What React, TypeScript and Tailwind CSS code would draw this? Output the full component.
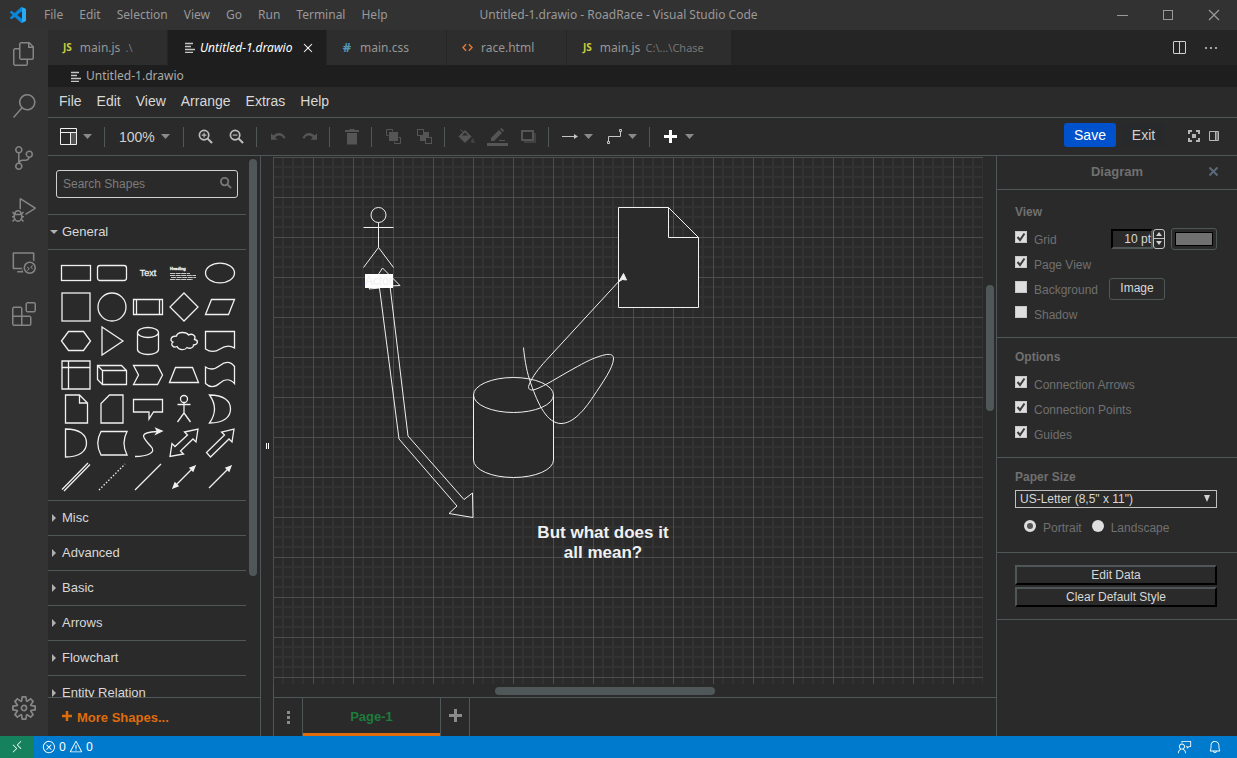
import type { ReactNode } from 'react';
import {
  VscBell,
  VscChromeClose,
  VscChromeMaximize,
  VscChromeMinimize,
  VscClose,
  VscDebugAlt,
  VscEllipsis,
  VscError,
  VscExtensions,
  VscFeedback,
  VscFiles,
  VscRemote,
  VscRemoteExplorer,
  VscSearch,
  VscSettingsGear,
  VscSourceControl,
  VscSplitHorizontal,
  VscWarning,
} from 'react-icons/vsc';

const windowMenu = ['File', 'Edit', 'Selection', 'View', 'Go', 'Run', 'Terminal', 'Help'];
const drawioMenu = ['File', 'Edit', 'View', 'Arrange', 'Extras', 'Help'];
const sections = ['Misc', 'Advanced', 'Basic', 'Arrows', 'Flowchart', 'Entity Relation'];

const activities = [
  { name: 'Explorer', icon: <VscFiles /> },
  { name: 'Search', icon: <VscSearch /> },
  { name: 'Source Control', icon: <VscSourceControl /> },
  { name: 'Run and Debug', icon: <VscDebugAlt /> },
  { name: 'Remote Explorer', icon: <VscRemoteExplorer /> },
  { name: 'Extensions', icon: <VscExtensions /> },
];

// every shape is drawn in a 32x32 box
const shapes: { name: string; art: ReactNode }[] = [
  { name: 'Rectangle', art: <rect x="1.5" y="8.5" width="29" height="15" /> },
  { name: 'Rounded Rectangle', art: <rect x="1.5" y="8.5" width="29" height="15" rx="2.5" /> },
  {
    name: 'Text',
    art: (
      <text x="16" y="19" textAnchor="middle" fontSize="9" fill="#f0f0f0" stroke="#f0f0f0" strokeWidth="0.3">
        Text
      </text>
    ),
  },
  {
    name: 'Textbox',
    art: (
      <>
        <text x="2" y="13" fontSize="4" fontWeight="bold" fill="#f0f0f0" stroke="#f0f0f0" strokeWidth="0.3">
          Heading
        </text>
        <path d="M2 16.5h20M2 18.5h26M3 20.5h25M2 22.5h23" strokeDasharray="5 0.6" strokeWidth="1" opacity="0.8" />
      </>
    ),
  },
  { name: 'Ellipse', art: <ellipse cx="16" cy="16" rx="14.5" ry="9.8" /> },
  { name: 'Square', art: <rect x="2" y="2" width="28" height="28" /> },
  { name: 'Circle', art: <circle cx="16" cy="16" r="14" /> },
  { name: 'Process', art: <path d="M1.5 8.5h29v15h-29zM4.5 8.5v15M27.5 8.5v15" /> },
  { name: 'Diamond', art: <path d="M16 2l14 14-14 14L2 16z" /> },
  { name: 'Parallelogram', art: <path d="M1.5 23.5l6-15h23l-6 15z" /> },
  { name: 'Hexagon', art: <path d="M1.5 16L8.5 6.5h15L30.5 16l-7 9.5h-15z" /> },
  { name: 'Triangle', art: <path d="M6 2l21 14L6 30z" /> },
  { name: 'Cylinder', art: <path d="M5.5 7.5a10.5 5 0 0 1 21 0v17a10.5 5 0 0 1-21 0zM5.5 7.5a10.5 5 0 0 0 21 0" /> },
  {
    name: 'Cloud',
    art: (
      <path d="M8.5 11c-6 0-7 4.500-3.500 6-3 2 0 6.500 4 4.500 2 4 8 4 10 1 3.500 2 7-.5 6.500-2.500 5-.5 5-5 1-5.500 2-4-2.500-6.500-6-4.500-2-3.500-11-3.500-12 1z" />
    ),
  },
  { name: 'Document', art: <path d="M1.5 6.5h29v16.5c-5-3-10-2-14.5 1s-10 3-14.5 0z" /> },
  { name: 'Internal Storage', art: <path d="M2 2h28v28H2zM2 8.5h28M8.5 2v28" /> },
  { name: 'Cube', art: <path d="M1.5 6.5h24l5 5v14h-24l-5-5zM1.5 6.5l5 5h24M6.5 11.5v14" /> },
  { name: 'Step', art: <path d="M1.5 6.5h24l5 9.5-5 9.5h-24l5-9.5z" /> },
  { name: 'Trapezoid', art: <path d="M1.5 23.5l6-15h17l6 15z" /> },
  {
    name: 'Tape',
    art: <path d="M1.5 8c5 3.500 10 2 14.5-1.500s10-5 14.5 1v17c-4.500-5-10-4.500-14.500-.5s-10 5-14.500.5z" />,
  },
  { name: 'Note', art: <path d="M5.5 2h14l8 8v20h-22zM19.5 2v8h8" /> },
  { name: 'Card', art: <path d="M13.5 2h13.5v28H5V10.5z" /> },
  { name: 'Callout', art: <path d="M1.5 6.5h29v12.5h-9l-4.500 7V19H1.5z" /> },
  {
    name: 'Actor',
    art: (
      <>
        <circle cx="16" cy="6" r="3.5" />
        <path d="M16 9.5V20M9.5 11.5h13M16 20l-6.500 9M16 20l6.500 9" />
      </>
    ),
  },
  { name: 'Or', art: <path d="M5.5 2C20 2 26.5 8 26.5 16S20 30 5.5 30q10-14 0-28z" /> },
  { name: 'And', art: <path d="M5.5 2C20 2 26.5 8 26.5 16S20 30 5.5 30z" /> },
  { name: 'Data Storage', art: <path d="M5 4.5h26q-6 11.500 0 23.500H5q-6.500-12 0-23.500z" /> },
  {
    name: 'Curve',
    art: (
      <>
        <path d="M3 29.5c12 0 22-4 16-10-8-9-14-14 6-15" />
        <path d="M30 4l-6-2.500 1.500 3L24 7z" fill="#f0f0f0" />
      </>
    ),
  },
  { name: 'Bidirectional Arrow', art: <path d="M30 2l-2 13-3-3L12.5 24l3 3L2 29.5l2-13 3 3L19.5 8l-3-3z" /> },
  { name: 'Arrow', art: <path d="M30 2l-2 13-3-3L6.5 30l-4-4.500L20.5 8l-3-3z" /> },
  { name: 'Link', art: <path d="M2 28.5L28 2M4 30L30 3.5" /> },
  { name: 'Dotted Line', art: <path d="M3 29L29 3" strokeDasharray="1.5 1.8" /> },
  { name: 'Line', art: <path d="M3 29L29 3" /> },
  {
    name: 'Bidirectional Connector',
    art: (
      <>
        <path d="M6 26L26 6" />
        <path d="M27 5l-5 2 3 3zM5 27l5-2-3-3z" fill="#f0f0f0" />
      </>
    ),
  },
  {
    name: 'Directional Connector',
    art: (
      <>
        <path d="M5 27L26 6" />
        <path d="M27 5l-5 2 3 3z" fill="#f0f0f0" />
      </>
    ),
  },
];

function Caret() {
  return (
    <svg width="9" height="5" viewBox="0 0 9 5" fill="#8a8a8a">
      <path d="M0 0h9L4.5 5z" />
    </svg>
  );
}

function TextFileIcon() {
  return (
    <svg width="10" height="11" viewBox="0 0 10 11" stroke="#c5c5c5" fill="none" strokeWidth="1.3">
      <path d="M0 1.5h8M0 4.500h6M0 7.500h10M0 10.500h8" />
    </svg>
  );
}

function Separator() {
  return <div className="ml-1 mr-1.5 h-5 w-px shrink-0 bg-[#505759]" />;
}

function ToolButton({ name, children }: { name: string; children: ReactNode }) {
  return (
    <button type="button" aria-label={name} className="flex h-8 w-[31px] shrink-0 items-center justify-center">
      {children}
    </button>
  );
}

function TitleBar() {
  return (
    <header className="grid h-[30px] shrink-0 grid-cols-[1fr_auto_1fr] items-center bg-[#323233] text-xs text-[#999999]">
      <div className="flex items-center">
        <svg width="16" height="16" viewBox="0 0 24 24" className="mx-2.5">
          <path
            fill="#0a86d9"
            d="M23.15 2.587L18.21.21a1.494 1.494 0 0 0-1.705.29l-9.46 8.63-4.12-3.128a.999.999 0 0 0-1.276.057L.327 7.261A1 1 0 0 0 .326 8.74L3.899 12 .326 15.26a1 1 0 0 0 .001 1.479L1.65 17.94a.999.999 0 0 0 1.276.057l4.12-3.128 9.46 8.63a1.492 1.492 0 0 0 1.704.29l4.942-2.377A1.5 1.5 0 0 0 24 20.06V3.939a1.5 1.5 0 0 0-.85-1.352zm-5.146 14.861L10.826 12l7.178-5.448v10.896z"
          />
          <path fill="#2aaaf3" d="M18 .2l5.2 2.400L24 4v16l-.8 1.400-5.200 2.400z" />
        </svg>
        <nav className="flex">
          {windowMenu.map((item) => (
            <button key={item} type="button" className="h-[30px] px-2">
              {item}
            </button>
          ))}
        </nav>
      </div>
      <p>Untitled-1.drawio - RoadRace - Visual Studio Code</p>
      <div className="flex justify-end text-base">
        <button type="button" aria-label="Minimize" className="flex h-[30px] w-[46px] items-center justify-center">
          <VscChromeMinimize />
        </button>
        <button type="button" aria-label="Maximize" className="flex h-[30px] w-[46px] items-center justify-center">
          <VscChromeMaximize />
        </button>
        <button type="button" aria-label="Close" className="flex h-[30px] w-[46px] items-center justify-center">
          <VscChromeClose />
        </button>
      </div>
    </header>
  );
}

function ActivityBar() {
  return (
    <aside className="flex w-12 shrink-0 flex-col items-center bg-[#333333] text-2xl text-[#858585]">
      {activities.map((item) => (
        <button key={item.name} type="button" aria-label={item.name} className="flex h-[52px] w-12 items-center justify-center pb-1">
          {item.icon}
        </button>
      ))}
      <button type="button" aria-label="Manage" className="mt-auto mb-1 flex h-12 w-12 items-center justify-center">
        <VscSettingsGear />
      </button>
    </aside>
  );
}

function EditorTabs() {
  const tab = 'flex h-full w-[119px] items-center gap-2 bg-[#2d2d2d] pl-[15px]';
  return (
    <div className="flex h-[35px] shrink-0 gap-px bg-[#252526] text-xs text-[#969696]">
      <button type="button" className={tab}>
        <b className="text-[10px] text-[#cbcb41]">JS</b>
        <span>
          main.js <span className="ml-0.5 text-[11px] text-[#757575]">.\</span>
        </span>
      </button>
      <div className="flex h-full w-[158px] items-center bg-[#1e1e1e] pl-[17px] text-white italic">
        <TextFileIcon />
        <button type="button" className="ml-[5px] italic">
          Untitled-1.drawio
        </button>
        <button type="button" aria-label="Close tab" className="ml-2 text-base">
          <VscClose />
        </button>
      </div>
      <button type="button" className={tab}>
        <b className="w-[10px] text-[13px] text-[#519aba]">#</b>
        <span>main.css</span>
      </button>
      <button type="button" className={tab}>
        <svg width="11" height="9" viewBox="0 0 12 9" fill="none" stroke="#e37933" strokeWidth="1.6">
          <path d="M4.5 1L1 4.5 4.5 8M7.5 1L11 4.5 7.5 8" />
        </svg>
        <span>race.html</span>
      </button>
      <button type="button" className="flex h-full w-[164px] items-center gap-2 bg-[#2d2d2d] pl-4">
        <b className="text-[10px] text-[#cbcb41]">JS</b>
        <span>
          main.js <span className="ml-0.5 text-[11px] text-[#757575]">C:\...\Chase</span>
        </span>
      </button>
      <div className="ml-auto flex items-center gap-4 pr-[18px] text-base text-[#d0d0d0]">
        <button type="button" aria-label="Split editor">
          <VscSplitHorizontal />
        </button>
        <button type="button" aria-label="More actions">
          <VscEllipsis />
        </button>
      </div>
    </div>
  );
}

function Toolbar() {
  return (
    <div className="flex h-[38px] shrink-0 items-center border-b border-[#505759] pl-2">
      <button type="button" aria-label="View" className="flex h-8 w-11 shrink-0 items-center gap-1.5 pl-1">
        <svg width="17" height="17" viewBox="0 0 17 17" fill="none" stroke="#f0f0f0">
          <rect x="11" y="5" width="5" height="11" fill="#555555" stroke="none" />
          <path d="M.5.5h16v16H.5zM.5 4.5h16M10.5 4.5v12" />
        </svg>
        <Caret />
      </button>
      <Separator />
      <button type="button" className="flex h-8 w-[68px] shrink-0 items-center gap-1.5 pl-2 text-sm text-[#d0d0d0]">
        100% <Caret />
      </button>
      <Separator />
      <ToolButton name="Zoom In">
        <svg width="15" height="15" viewBox="0 0 16 16" fill="none" stroke="#bdbdbd" strokeWidth="1.8">
          <circle cx="6.5" cy="6.5" r="5" />
          <path d="M10 10l5 5" strokeWidth="2.2" />
          <path d="M4 6.5h5M6.5 4v5" strokeWidth="1.2" />
        </svg>
      </ToolButton>
      <ToolButton name="Zoom Out">
        <svg width="15" height="15" viewBox="0 0 16 16" fill="none" stroke="#bdbdbd" strokeWidth="1.8">
          <circle cx="6.5" cy="6.5" r="5" />
          <path d="M10 10l5 5" strokeWidth="2.2" />
          <path d="M4 6.5h5" strokeWidth="1.2" />
        </svg>
      </ToolButton>
      <Separator />
      <ToolButton name="Undo">
        <svg width="15" height="9" viewBox="0 0 16 9" fill="#555555">
          <path d="M0 1l2.500 2.500C6-.5 13-.5 15.5 6l-2 .8C11.5 2.500 7 2.500 4.500 5.500L7 8H0z" />
        </svg>
      </ToolButton>
      <ToolButton name="Redo">
        <svg width="15" height="9" viewBox="0 0 16 9" fill="#555555">
          <path d="M16 1l-2.500 2.500C10-.5 3-.5.5 6l2 .8C4.500 2.500 9 2.500 11.500 5.500L9 8h7z" />
        </svg>
      </ToolButton>
      <Separator />
      <ToolButton name="Delete">
        <svg width="14" height="16" viewBox="0 0 14 16" fill="#555555">
          <path d="M0 1h4l1-1h4l1 1h4v2H0zM2 4h10v11.500H2z" />
        </svg>
      </ToolButton>
      <Separator />
      <ToolButton name="To Front">
        <svg width="15" height="15" viewBox="0 0 15 15" fill="none" stroke="#555555">
          <path d="M.5 6.500v-6h6M14.5 8.500v6h-6M.5 6.500h2M14.5 8.500h-2M6.500.5v2M8.500 14.500v-2" />
          <rect x="3" y="3" width="9" height="9" fill="#555555" stroke="none" />
        </svg>
      </ToolButton>
      <ToolButton name="To Back">
        <svg width="15" height="15" viewBox="0 0 15 15" fill="none" stroke="#555555">
          <rect x=".5" y=".5" width="6" height="6" />
          <rect x="8.5" y="8.5" width="6" height="6" />
          <path d="M7 3h5v5H8v4H3V7h4z" fill="#555555" stroke="none" />
        </svg>
      </ToolButton>
      <Separator />
      <ToolButton name="Fill Color">
        <svg width="17" height="15" viewBox="0 0 17 15">
          <path d="M2.5.5l3 3M7 1.500l6 6-6 6-6-6z" fill="#555555" stroke="#555555" />
          <path d="M4 6.500L7 3.500l3 3z" fill="#2a2a2a" />
          <path d="M14.8 9c3 4 2 5 0 5s-3-1 0-5z" fill="#404040" />
        </svg>
      </ToolButton>
      <ToolButton name="Line Color">
        <svg width="21" height="18" viewBox="0 0 21 18" fill="#555555">
          <path d="M4 13v-3l8-8 3 3-8 8zM13 1l1.500-1L17 2.500 16 4zM12 12h6v1h-6zM0 15h21v3H0z" />
        </svg>
      </ToolButton>
      <ToolButton name="Shadow">
        <svg width="15" height="13" viewBox="0 0 15 13">
          <path d="M3 3h12v10H3z" fill="#404040" />
          <rect x="1" y="1" width="11" height="9" fill="#2a2a2a" stroke="#555555" strokeWidth="2" />
        </svg>
      </ToolButton>
      <Separator />
      <button type="button" aria-label="Connection" className="flex h-8 w-[45px] shrink-0 items-center gap-1.5 pl-[7px]">
        <svg width="16" height="5" viewBox="0 0 16 5">
          <path d="M0 2.5h13" stroke="#c5c5c5" />
          <path d="M12 0l4 2.500L12 5z" fill="#c5c5c5" />
        </svg>
        <Caret />
      </button>
      <button type="button" aria-label="Waypoints" className="flex h-8 w-[45px] shrink-0 items-center gap-1.5 pl-[7px]">
        <svg width="15" height="15" viewBox="0 0 15 15" fill="none" stroke="#c5c5c5">
          <path d="M1.5 12V7.5h12V3M.5 12.5h2v2h-2zM12.5.5h2v2h-2z" />
        </svg>
        <Caret />
      </button>
      <Separator />
      <button type="button" aria-label="Insert" className="flex h-8 w-11 shrink-0 items-center gap-2 pl-2">
        <svg width="13" height="13" viewBox="0 0 13 13" stroke="#ffffff" strokeWidth="3">
          <path d="M0 6.5h13M6.5 0v13" />
        </svg>
        <Caret />
      </button>
      <div className="ml-auto flex items-center pr-[18px]">
        <button type="button" className="mb-1 h-6 w-[52px] rounded-[3px] bg-[#0052cc] text-sm text-white">
          Save
        </button>
        <button type="button" className="mb-1 ml-1.5 h-6 w-[43px] rounded-[3px] bg-[#28292b] text-sm text-[#d0d0d0]">
          Exit
        </button>
        <button type="button" aria-label="Fullscreen" className="mb-0.5 ml-[23px]">
          <svg width="12" height="12" viewBox="0 0 12 12" fill="none" stroke="#b5b5b5" strokeWidth="2">
            <path d="M1 4V1h3M8 1h3v3M11 8v3H8M4 11H1V8" />
            <rect x="4" y="4" width="4" height="4" fill="#b5b5b5" stroke="none" />
          </svg>
        </button>
        <button type="button" aria-label="Format panel" className="mb-0.5 ml-[9px]">
          <svg width="10" height="10" viewBox="0 0 10 10" fill="none" stroke="#b5b5b5">
            <rect x="7" y="1" width="2" height="8" fill="#777777" stroke="none" />
            <path d="M.5.5h9v9h-9zM6.5.5v9" />
          </svg>
        </button>
      </div>
    </div>
  );
}

function ShapePanel() {
  return (
    <aside className="flex w-[213px] shrink-0 flex-col border-r border-[#505759]">
      <div className="flex min-h-0 flex-1 overflow-hidden">
        <div className="w-[198px]">
          <div className="h-[58px] pt-3.5 pr-2 pl-2">
            <div className="flex h-7 items-center rounded-[3px] border border-[#d0d0d0] pr-[5px] pl-1.5">
              <input
                type="text"
                aria-label="Search Shapes"
                placeholder="Search Shapes"
                className="min-w-0 flex-1 bg-transparent text-xs text-[#d0d0d0] outline-none placeholder:text-[#7c7c7c]"
              />
              <svg width="12" height="12" viewBox="0 0 13 13" fill="none" stroke="#777777" strokeWidth="2" className="mb-0.5">
                <circle cx="5" cy="5" r="4" />
                <path d="M8 8l4 4" />
              </svg>
            </div>
          </div>
          <button type="button" className="flex h-9 w-full items-center gap-1 border-y border-[#505759] pl-0.5 text-[13px] text-[#d8d8d8]">
            <svg width="8" height="4" viewBox="0 0 8 4" fill="#b0b0b0">
              <path d="M0 0h8L4 4z" />
            </svg>
            General
          </button>
          <div className="grid grid-cols-[repeat(5,36px)] pt-1.5 pb-1.5 pl-2.5">
            {shapes.map((shape) => (
              <button key={shape.name} type="button" aria-label={shape.name} className="flex h-[34px] items-center justify-center">
                <svg width="32" height="32" viewBox="0 0 32 32" fill="none" stroke="#f0f0f0" strokeWidth="1.3">
                  {shape.art}
                </svg>
              </button>
            ))}
          </div>
          {sections.map((section) => (
            <button
              key={section}
              type="button"
              className="flex h-[35px] w-full items-center gap-1.5 border-t border-[#505759] pl-1 text-[13px] text-[#d8d8d8]"
            >
              <svg width="4" height="8" viewBox="0 0 4 8" fill="#b0b0b0">
                <path d="M0 0l4 4-4 4z" />
              </svg>
              {section}
            </button>
          ))}
        </div>
        <div className="mt-[3px] ml-[3px] h-[417px] w-2 rounded-full bg-[#505759]" />
      </div>
      <button
        type="button"
        className="flex h-[39px] shrink-0 items-center gap-[5px] border-t border-[#505759] pl-3.5 text-[13px] font-bold text-[#df6c0c]"
      >
        <svg width="10" height="10" viewBox="0 0 10 10" stroke="#df6c0c" strokeWidth="2.5" className="mb-0.5">
          <path d="M0 5h10M5 0v10" />
        </svg>
        <span className="pt-0.5">More Shapes...</span>
      </button>
    </aside>
  );
}

function Canvas() {
  return (
    <svg className="min-w-0 flex-1" height="100%" stroke="#f0f0f0" fill="none">
      <defs>
        <pattern id="grid" width="40" height="40" patternUnits="userSpaceOnUse">
          <path d="M10 0v40M20 0v40M30 0v40M0 10h40M0 20h40M0 30h40" stroke="#323232" strokeWidth="2" />
          <path d="M.5 0v40M0 .5h40" stroke="#4d4d4d" />
        </pattern>
      </defs>
      <rect width="100%" height="100%" fill="url(#grid)" stroke="none" />

      <circle cx="105.5" cy="58" r="7.5" />
      <path d="M105.5 65.500v25M90.5 70.500h30M105.5 90.500l-15 20M105.5 90.500l15 20" />

      <path d="M109.5 111L127 128.5l-10 .5L135 279l56 63.500 8.500-6.500.5 24.500-24-4 8-7.500-58-67-19.500-151-10.500 1z" />
      <rect x="92" y="117" width="28" height="14" fill="#ffffff" stroke="none" />
      <text x="106" y="128" textAnchor="middle" fontSize="12" fill="#f0f0f0" stroke="none">
        Actor
      </text>

      <path d="M345.5 50.500h50l30 30v70h-80zM395.5 50.500v30h30" fill="#2a2a2a" />
      <path d="M200.5 238a40 17.500 0 0 1 80 0v65a40 17.500 0 0 1-80 0z" fill="#2a2a2a" />
      <path d="M200.5 238a40 17.500 0 0 0 80 0" />

      <path d="M250.5 190.500C252 205 254 216 258 227c7 20 16 39.500 30 39.500 12 0 23-13 32-26.500 10-15 20-29 20.500-38 .5-4-3-5-7-4.500-11 2-22 8-33.500 14.500-13 7-28 17-38 20.500-5 1.500-7.500-.5-6-4.500 3-8 10-17 17-24.500L348 122" />
      <path d="M350.5 116.500l-4.500 8 3.500-2 4 .5z" fill="#f0f0f0" />

      <text x="330" y="381" textAnchor="middle" fontSize="17" fontWeight="bold" fill="#f0f0f0" stroke="none">
        But what does it
      </text>
      <text x="330" y="401" textAnchor="middle" fontSize="17" fontWeight="bold" fill="#f0f0f0" stroke="none">
        all mean?
      </text>
    </svg>
  );
}

function Editor() {
  return (
    <main className="flex min-w-0 flex-1 flex-col">
      <div className="mt-px flex min-h-0 flex-1">
        <Canvas />
        <div className="flex w-[13px] justify-center pt-32">
          <div className="h-[126px] w-2 rounded-full bg-[#505759]" />
        </div>
      </div>
      <div className="flex h-[13px] shrink-0 items-center border-l border-[#505759] pl-[221px]">
        <div className="h-2 w-[220px] rounded-full bg-[#505759]" />
      </div>
      <div className="flex h-[39px] shrink-0 border-t border-l border-[#505759]">
        <button type="button" aria-label="Pages" className="flex w-[29px] items-center justify-center border-r border-[#505759]">
          <svg width="3" height="13" viewBox="0 0 3 13" fill="#8a8a8a">
            <path d="M0 0h3v3H0zM0 5h3v3H0zM0 10h3v3H0z" />
          </svg>
        </button>
        <button type="button" className="w-[137px] border-b-[3px] border-[#df6c0c] pt-[3px] text-[13px] font-bold text-[#1e7b3c]">
          Page-1
        </button>
        <button type="button" aria-label="Insert page" className="flex w-[30px] items-center justify-center border-x border-[#505759] pb-1">
          <svg width="13" height="13" viewBox="0 0 13 13" stroke="#8a8a8a" strokeWidth="3">
            <path d="M0 6.5h13M6.5 0v13" />
          </svg>
        </button>
      </div>
    </main>
  );
}

function Check({ label, checked = false }: { label: string; checked?: boolean }) {
  return (
    <label className="flex h-[25px] items-center">
      <span className="relative mr-[7px] mb-[3px] h-3 w-3">
        <input
          type="checkbox"
          defaultChecked={checked}
          className="peer block h-3 w-3 appearance-none border border-[#c8c8c8] bg-[#dedede]"
        />
        <svg
          viewBox="0 0 12 12"
          className="pointer-events-none absolute inset-0 hidden h-3 w-3 peer-checked:block"
          fill="none"
          stroke="#3c3c3c"
          strokeWidth="2"
        >
          <path d="M2.5 6l2.500 3 4.500-6.500" />
        </svg>
      </span>
      <span className="pt-0.5">{label}</span>
    </label>
  );
}

function Radio({ label, checked = false }: { label: string; checked?: boolean }) {
  return (
    <label className="flex items-center">
      <input
        type="radio"
        name="orientation"
        defaultChecked={checked}
        className="mr-[7px] mb-1 h-3 w-3 appearance-none rounded-full border-[#dedede] bg-[#dedede] checked:border-[3px] checked:bg-[#555555]"
      />
      {label}
    </label>
  );
}

function FormatPanel() {
  const wideButton =
    'h-5 w-full border-2 border-t-[#505759] border-r-black border-b-black border-l-[#505759] text-xs leading-4 text-[#d8d8d8]';
  return (
    <aside className="w-[241px] shrink-0 border-l border-[#505759] text-xs text-[#707070]">
      <div className="relative flex h-[34px] items-center justify-center border-b border-[#505759] pb-0.5">
        <h2 className="text-[13px] font-bold">Diagram</h2>
        <button type="button" aria-label="Hide panel" className="absolute right-[19px]">
          <svg width="9" height="9" viewBox="0 0 9 9" stroke="#5a6a7a" strokeWidth="2">
            <path d="M.5.5l8 8M8.5.5l-8 8" />
          </svg>
        </button>
      </div>

      <section className="h-[148px] border-b border-[#505759] pt-3.5 pr-5 pl-[18px]">
        <h3 className="mb-1.5 font-bold leading-4">View</h3>
        <div className="flex items-center">
          <Check label="Grid" checked />
          <input
            type="text"
            aria-label="Grid size"
            defaultValue="10 pt"
            className="ml-auto h-5 w-[42px] border-2 border-t-black border-r-[#505759] border-b-[#505759] border-l-black bg-transparent text-right text-xs text-[#d8d8d8]"
          />
          <div className="flex h-5 w-3 flex-col divide-y divide-[#c5c5c5] rounded-[3px] border border-[#c5c5c5]">
            <button type="button" aria-label="Increase" className="flex flex-1 items-center justify-center">
              <svg width="6" height="4" viewBox="0 0 6 4" fill="#d0d0d0">
                <path d="M0 4h6L3 0z" />
              </svg>
            </button>
            <button type="button" aria-label="Decrease" className="flex flex-1 items-center justify-center">
              <svg width="6" height="4" viewBox="0 0 6 4" fill="#d0d0d0">
                <path d="M0 0h6L3 4z" />
              </svg>
            </button>
          </div>
          <button type="button" aria-label="Grid color" className="ml-1.5 h-[22px] w-[46px] rounded-[3px] border border-[#505759] p-[3px]">
            <span className="block h-full border border-black bg-[#707070]" />
          </button>
        </div>
        <Check label="Page View" checked />
        <div className="flex items-center">
          <Check label="Background" />
          <button type="button" className="ml-[11px] h-[22px] w-14 rounded-[3px] border border-[#505759] pb-0.5 leading-4 text-[#d8d8d8]">
            Image
          </button>
        </div>
        <Check label="Shadow" />
      </section>

      <section className="h-[120px] border-b border-[#505759] pt-[11px] pl-[18px]">
        <h3 className="mb-1.5 font-bold leading-4">Options</h3>
        <Check label="Connection Arrows" checked />
        <Check label="Connection Points" checked />
        <Check label="Guides" checked />
      </section>

      <section className="h-[95px] border-b border-[#505759] pt-[11px] pr-5 pl-[18px]">
        <h3 className="mb-[5px] font-bold leading-4">Paper Size</h3>
        <div className="relative">
          <select aria-label="Paper Size" className="block h-[18px] w-full appearance-none border border-[#c0c0c0] bg-[#2a2a2a] pl-1 text-xs leading-4 text-[#d8d8d8]">
            <option>US-Letter (8,5" x 11")</option>
          </select>
          <svg width="6" height="7" viewBox="0 0 6 7" fill="#d0d0d0" className="pointer-events-none absolute top-[5px] right-[7px]">
            <path d="M0 0h6L3 7z" />
          </svg>
        </div>
        <div className="flex gap-2.5 pt-3 pl-[9px]">
          <Radio label="Portrait" checked />
          <Radio label="Landscape" />
        </div>
      </section>

      <section className="flex h-[67px] flex-col gap-0.5 border-b border-[#505759] pt-3 pr-5 pl-[18px]">
        <button type="button" className={wideButton}>
          Edit Data
        </button>
        <button type="button" className={wideButton}>
          Clear Default Style
        </button>
      </section>
    </aside>
  );
}

function StatusBar() {
  return (
    <footer className="flex h-[22px] shrink-0 items-center bg-[#007acc] text-xs text-white">
      <button type="button" aria-label="Remote" className="flex h-full w-[34px] items-center justify-center bg-[#16825d] text-sm">
        <VscRemote />
      </button>
      <button type="button" aria-label="Problems" className="ml-2 flex items-center gap-[3px]">
        <VscError className="text-sm" /> 0 <VscWarning className="text-sm" /> 0
      </button>
      <div className="ml-auto flex items-center gap-4 pr-[15px] text-sm">
        <button type="button" aria-label="Feedback">
          <VscFeedback />
        </button>
        <button type="button" aria-label="Notifications">
          <VscBell />
        </button>
      </div>
    </footer>
  );
}

export default function App() {
  return (
    <div className="flex h-screen flex-col overflow-hidden bg-[#2a2a2a] font-['Noto_Sans',sans-serif]">
      <TitleBar />
      <div className="flex min-h-0 flex-1">
        <ActivityBar />
        <div className="flex min-w-0 flex-1 flex-col">
          <EditorTabs />
          <div className="flex h-[22px] shrink-0 items-center gap-[5px] bg-[#1e1e1e] pl-[23px] text-xs text-[#a9a9a9]">
            <TextFileIcon />
            Untitled-1.drawio
          </div>
          <div className="flex min-h-0 flex-1 flex-col font-['Liberation_Sans',sans-serif]">
            <nav className="flex h-[31px] shrink-0 gap-px border-b border-[#505759] pb-0.5 pl-1 text-sm text-[#d8d8d8]">
              {drawioMenu.map((item) => (
                <button key={item} type="button" className="px-[7px]">
                  {item}
                </button>
              ))}
            </nav>
            <Toolbar />
            <div className="flex min-h-0 flex-1">
              <ShapePanel />
              <div className="flex w-3 shrink-0 items-center justify-center gap-px">
                <div className="h-1.5 w-px bg-white" />
                <div className="h-1.5 w-px bg-white" />
              </div>
              <Editor />
              <FormatPanel />
            </div>
          </div>
        </div>
      </div>
      <StatusBar />
    </div>
  );
}
